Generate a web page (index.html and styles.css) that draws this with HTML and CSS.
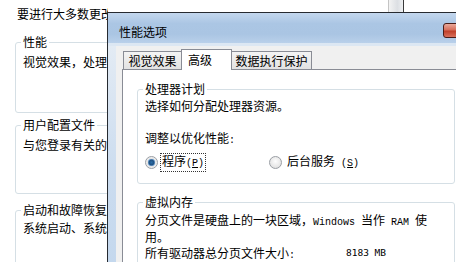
FILE: index.html
```html
<!DOCTYPE html>
<html lang="zh-CN">
<head>
<meta charset="utf-8">
<title>性能选项</title>
<link rel="stylesheet" href="styles.css">
</head>
<body>
<div class="bgwin">
  <p class="intro">要进行大多数更改，您必须作为管理员登录。</p>
  <fieldset class="grp g1">
    <legend>性能</legend>
    <p>视觉效果，处理器计划，内存使用，以及虚拟内存</p>
  </fieldset>
  <fieldset class="grp g2">
    <legend>用户配置文件</legend>
    <p>与您登录有关的桌面设置</p>
  </fieldset>
  <fieldset class="grp g3">
    <legend>启动和故障恢复</legend>
    <p>系统启动、系统失败和调试信息</p>
  </fieldset>
</div>
<div class="bgscroll"></div>

<div class="dialog">
  <div class="titlebar">
    <span class="title">性能选项</span>
    <span class="close">✕</span>
  </div>
  <div class="strip"></div>
  <div class="body">
    <div class="frame"></div>
    <div class="client">
      <div class="tabs">
        <div class="tab t1">视觉效果</div>
        <div class="tab t2 sel">高级</div>
        <div class="tab t3">数据执行保护</div>
      </div>
      <div class="panel">
        <fieldset class="box b1">
          <legend>处理器计划</legend>
          <p>选择如何分配处理器资源。</p>
          <p class="adjust">调整以优化性能<span class="lat">:</span></p>
          <div class="radios">
            <label class="radio on"><span class="dot"></span><span class="focus">程序<span class="lat">(<u>P</u>)</span></span></label>
            <label class="radio r2"><span class="dot"></span><span>后台服务<span class="lat"> (<u>S</u>)</span></span></label>
          </div>
        </fieldset>
        <fieldset class="box b2">
          <legend>虚拟内存</legend>
          <p class="para">分页文件是硬盘上的一块区域，<span class="lat">Windows </span>当作<span class="lat"> RAM </span>使<br>用。</p>
          <div class="sizerow"><span class="sizelabel">所有驱动器总分页文件大小<span class="lat">:</span></span><span class="num">8183 MB</span></div>
          <div class="btnrow"><span class="btn">更改<span class="lat">(<u>C</u>)...</span></span></div>
        </fieldset>
      </div>
    </div>
  </div>
</div>
</body>
</html>
```
FILE: styles.css
```css
html, body {
  margin: 0;
  padding: 0;
}
body {
  width: 456px;
  height: 262px;
  overflow: hidden;
  position: relative;
  background: #ffffff;
  color: #000;
  font-family: "Noto Sans CJK SC", "Noto Sans", sans-serif;
  font-size: 12px;
  line-height: 14px;
}
p { margin: 0; }
.lat {
  font-family: "Liberation Mono", monospace;
  font-size: 10px;
}

/* background window */
.bgwin {
  padding: 7px 0 0 15px;
  width: 108px;
  height: 262px;
  box-sizing: border-box;
  overflow: hidden;
}
.intro {
  margin: 0 0 14px 2px;
  white-space: nowrap;
}
.grp {
  margin: 0;
  width: 260px;
  box-sizing: border-box;
  border: 1px solid #d5dfe5;
  border-radius: 3px;
  padding: 6px 8px 0 7px;
  white-space: nowrap;
}
.grp legend {
  padding: 0 2px;
  margin-left: -2px;
  line-height: 14px;
}
.g1 { padding-bottom: 43px; }
.g2 { margin-top: 5px; padding-bottom: 41px; }
.g3 { margin-top: 9px; padding-top: 4px; padding-bottom: 40px; }

.bgscroll {
  position: absolute;
  left: 388px;
  top: 0;
  width: 14px;
  height: 12px;
  border-left: 1px solid #c4c4c4;
  border-right: 1px solid #3a3a3a;
  background: linear-gradient(to right, #f3f3f3, #dcdfe3 60%, #eef0f2);
}

/* dialog window */
.dialog {
  position: absolute;
  left: 107px;
  top: 12px;
  width: 370px;
  height: 270px;
  border: 1px solid #262a30;
  background: #f0f0f0;
  display: flex;
  flex-direction: column;
}
.titlebar {
  position: relative;
  height: 30px;
  flex: none;
  box-sizing: border-box;
  padding: 12px 0 0 11px;
  background: linear-gradient(to bottom, #c3d7ee 0%, #abc6e4 35%, #aac5e3 70%, #b9d0ea 100%);
}
.title {
  color: #000;
  line-height: 14px;
}
.close {
  position: absolute;
  left: 335px;
  top: 10px;
  width: 43px;
  height: 15px;
  box-sizing: border-box;
  border: 1px solid #4a1d18;
  border-radius: 3px;
  background: linear-gradient(to bottom, #e9a99b 0%, #d66f5c 45%, #c0402a 55%, #d9705c 100%);
  color: #fff;
  font-size: 10px;
  line-height: 13px;
  padding-left: 14px;
}
.strip {
  height: 3px;
  flex: none;
  background: #dce7f3;
}
.body {
  flex: 1;
  display: flex;
}
.frame {
  width: 8px;
  flex: none;
  background: linear-gradient(to bottom, #e3ebf4 0%, #cbdcef 50%, #c1d6ed 100%);
}
.client {
  flex: 1;
  padding: 3px 0 0 6px;
  background: #f0f0f0;
}
.tabs {
  display: flex;
  align-items: flex-end;
  margin-bottom: -1px;
  position: relative;
  z-index: 1;
}
.tab {
  box-sizing: border-box;
  height: 18px;
  margin-bottom: 1px;
  border: 1px solid #898c95;
  border-bottom: none;
  background: linear-gradient(to bottom, #f4f4f4, #e2e2e2);
  line-height: 17px;
  text-align: center;
  white-space: nowrap;
}
.t1 { width: 58px; margin-left: 1px; border-right: none; }
.t2 { width: 51px; }
.t3 { width: 80px; border-left: none; }
.tab.sel {
  height: 21px;
  margin-bottom: 0;
  background: #ffffff;
  line-height: 20px;
  text-align: left;
  padding-left: 6px;
}
.panel {
  border: 1px solid #898c95;
  background: #ffffff;
  padding: 12px 0 20px 14px;
  height: 200px;
}
.box {
  margin: 0;
  width: 318px;
  box-sizing: border-box;
  border: 1px solid #d5dfe5;
  border-radius: 3px;
  padding: 3px 10px 0 7px;
  white-space: nowrap;
}
.box legend {
  padding: 0 2px;
  margin-left: -2px;
  line-height: 14px;
}
.b1 { padding-bottom: 12px; }
.adjust { margin-top: 18px; }
.radios {
  margin-top: 6px;
  display: flex;
  align-items: center;
}
.radio {
  display: flex;
  align-items: center;
}
.dot {
  width: 13px;
  height: 13px;
  box-sizing: border-box;
  border-radius: 50%;
  border: 1px solid #9a9ea4;
  background: radial-gradient(circle at 50% 40%, #fdfdfd, #d9d9d9);
  margin-right: 3px;
  position: relative;
}
.radio.on .dot {
  background: radial-gradient(circle at 50% 50%, #2b6ea8 0, #1e4f80 2.5px, #8bb4dc 3.6px, #e4e4e4 4px, #f5f5f5 6px);
}
.focus {
  outline: 1px dotted #333;
  outline-offset: 0;
  padding: 0 1px;
}
.r2 { margin-left: 64px; }
.r2 .dot { margin-right: 5px; }
.b2 {
  margin-top: 11px;
  padding-top: 4px;
}
.sizerow {
  margin-top: 2px;
  display: flex;
}
.sizelabel { width: 201px; }
.num {
  font-family: "DejaVu Sans Mono", monospace;
  font-size: 9.5px;
}
.btnrow {
  margin-top: 7px;
  display: flex;
  justify-content: flex-end;
}
.btn {
  width: 72px;
  height: 23px;
  box-sizing: border-box;
  border: 1px solid #707070;
  border-radius: 3px;
  background: linear-gradient(to bottom, #f2f2f2 0%, #ebebeb 50%, #dddddd 51%, #cfcfcf 100%);
  text-align: center;
  line-height: 21px;
}
```
